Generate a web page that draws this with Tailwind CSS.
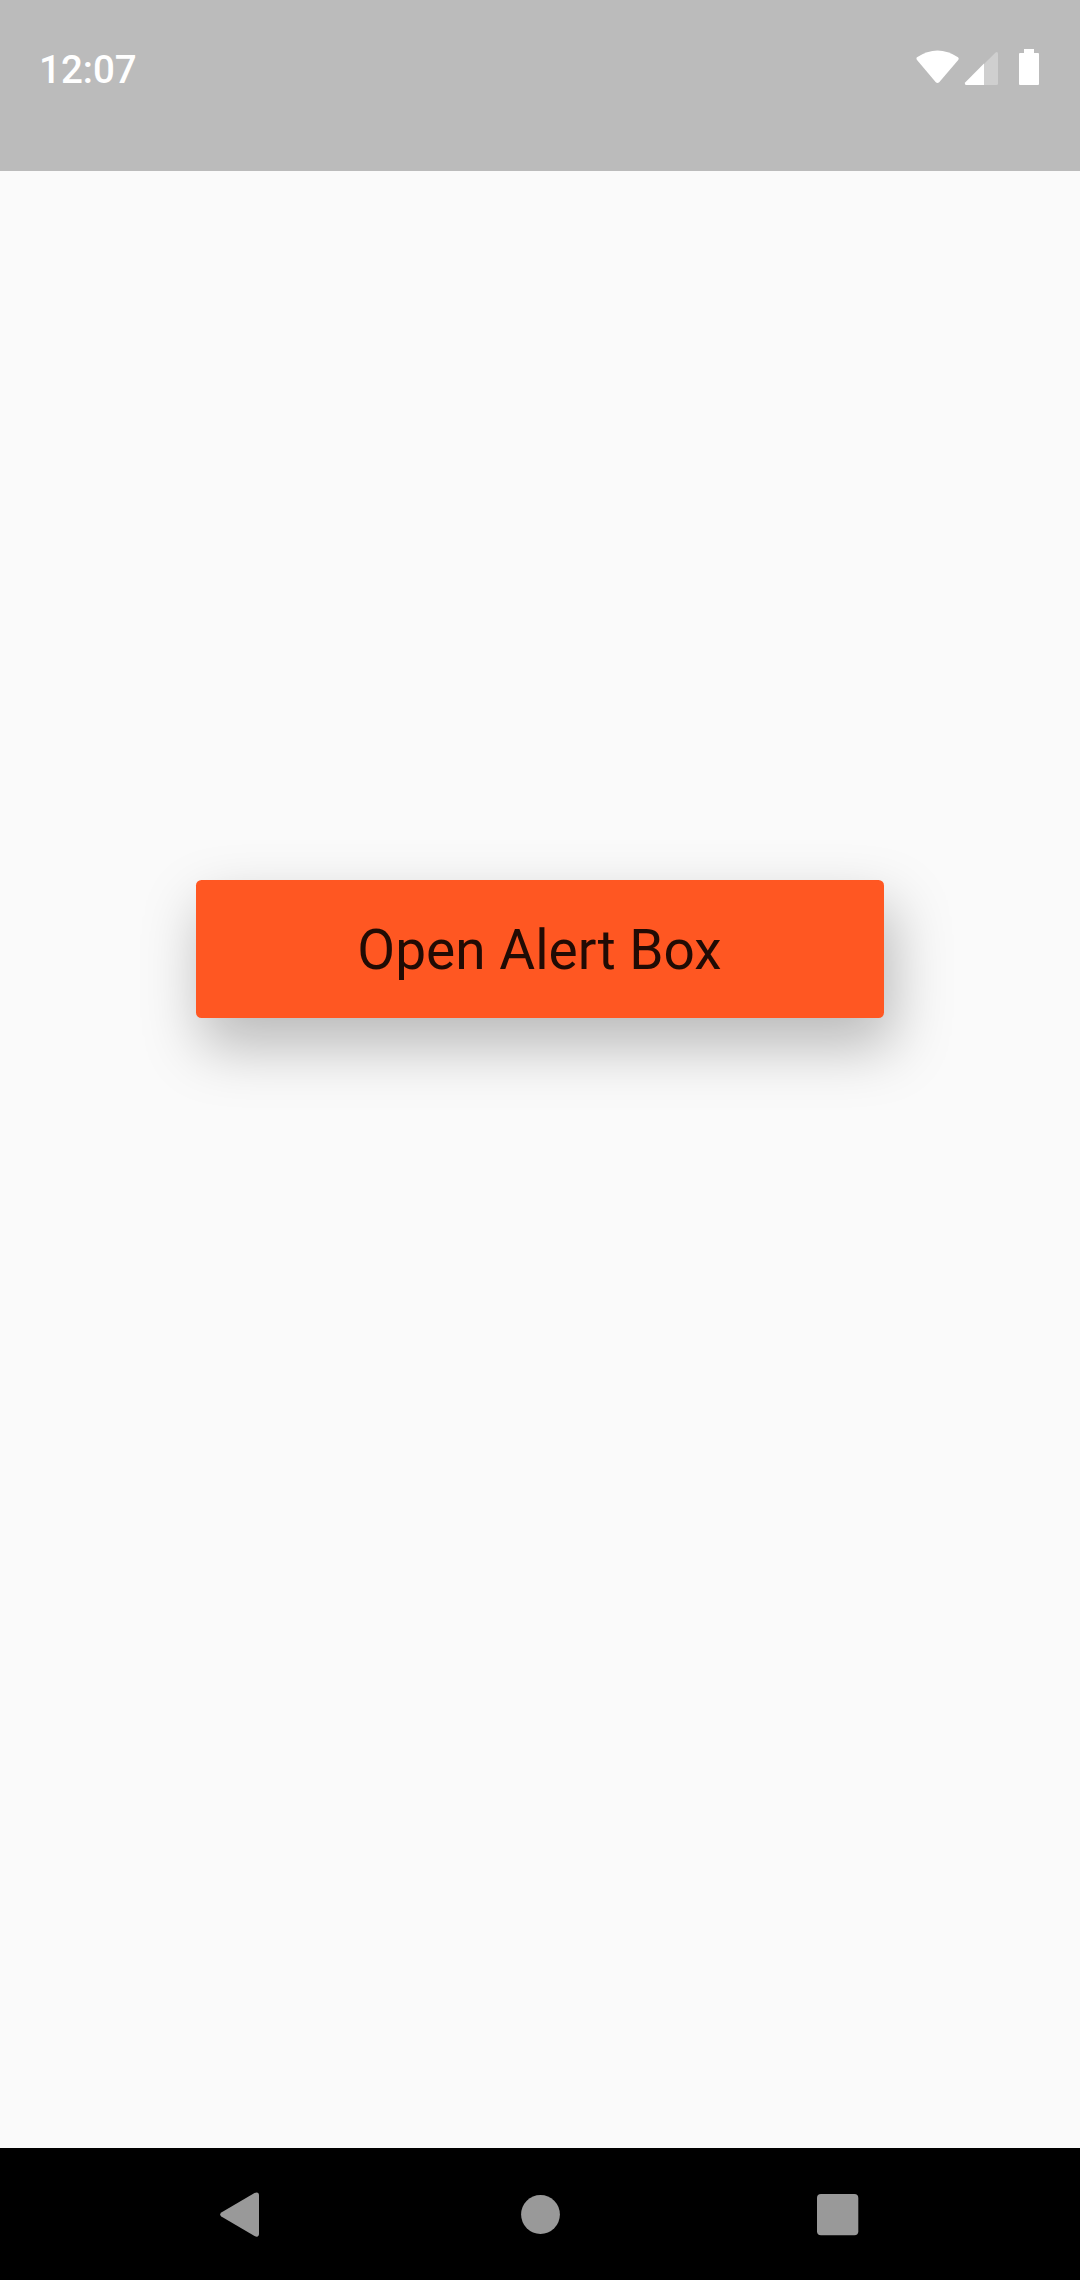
<!DOCTYPE html>
<html lang="en">
<head>
<meta charset="utf-8">
<title>Alert Box</title>
<script src="https://cdn.jsdelivr.net/npm/@tailwindcss/browser@4"></script>
</head>
<body class="flex h-[2280px] w-[1080px] flex-col overflow-hidden bg-[#fafafa] font-[Roboto,sans-serif]">
<header class="flex h-[171px] shrink-0 items-start justify-between bg-[#bbbbbb] pr-[41px] pl-[39px] text-white">
  <span class="mt-[47px] text-[38.5px] leading-[46px] font-medium">12:07</span>
  <svg class="mt-[49px]" width="123" height="36" viewBox="916 49 123 36" fill="currentColor">
    <path d="M917 57.2Q937.5 43.8 958 57.2Q959.3 58.4 958.2 60L939.2 82.2Q937.5 83.8 935.8 82.2L917 60Q915.9 58.4 917 57.2Z"/>
    <path d="M998 54V83.5Q998 85 996.5 85H984V64L995.6 52.4Q998 51.3 998 54Z" fill-opacity=".3"/>
    <path d="M984 63.6V85H966.4Q963.9 84.4 965.4 82.2Z"/>
    <path d="M1024 49H1034V53H1038Q1039 53 1039 54V84Q1039 85 1038 85H1020Q1019 85 1019 84V54Q1019 53 1020 53H1024Z"/>
  </svg>
</header>
<main class="flex flex-1 flex-col items-center pt-[709px]">
  <button class="h-[137.5px] w-[687.5px] rounded-[5.5px] bg-[#ff5722] pt-[2px] pr-[1px] text-[55px] leading-[64px] text-black/87 shadow-[7px_27px_58px_2px_rgba(0,0,0,0.26)]">Open Alert Box</button>
</main>
<nav class="h-[132px] shrink-0 bg-black text-[#999999]">
  <svg width="1080" height="132" viewBox="0 2148 1080 132" fill="currentColor">
    <path d="M221.3 2212.4L254.5 2192.9Q259 2191.2 259 2195.5V2233.5Q259 2238 254.5 2236.1L221.3 2216.6Q219 2214.5 221.3 2212.4Z"/>
    <circle cx="540.5" cy="2214.5" r="19.4"/>
    <rect x="817" y="2194" width="41.3" height="41.3" rx="4"/>
  </svg>
</nav>
</body>
</html>
